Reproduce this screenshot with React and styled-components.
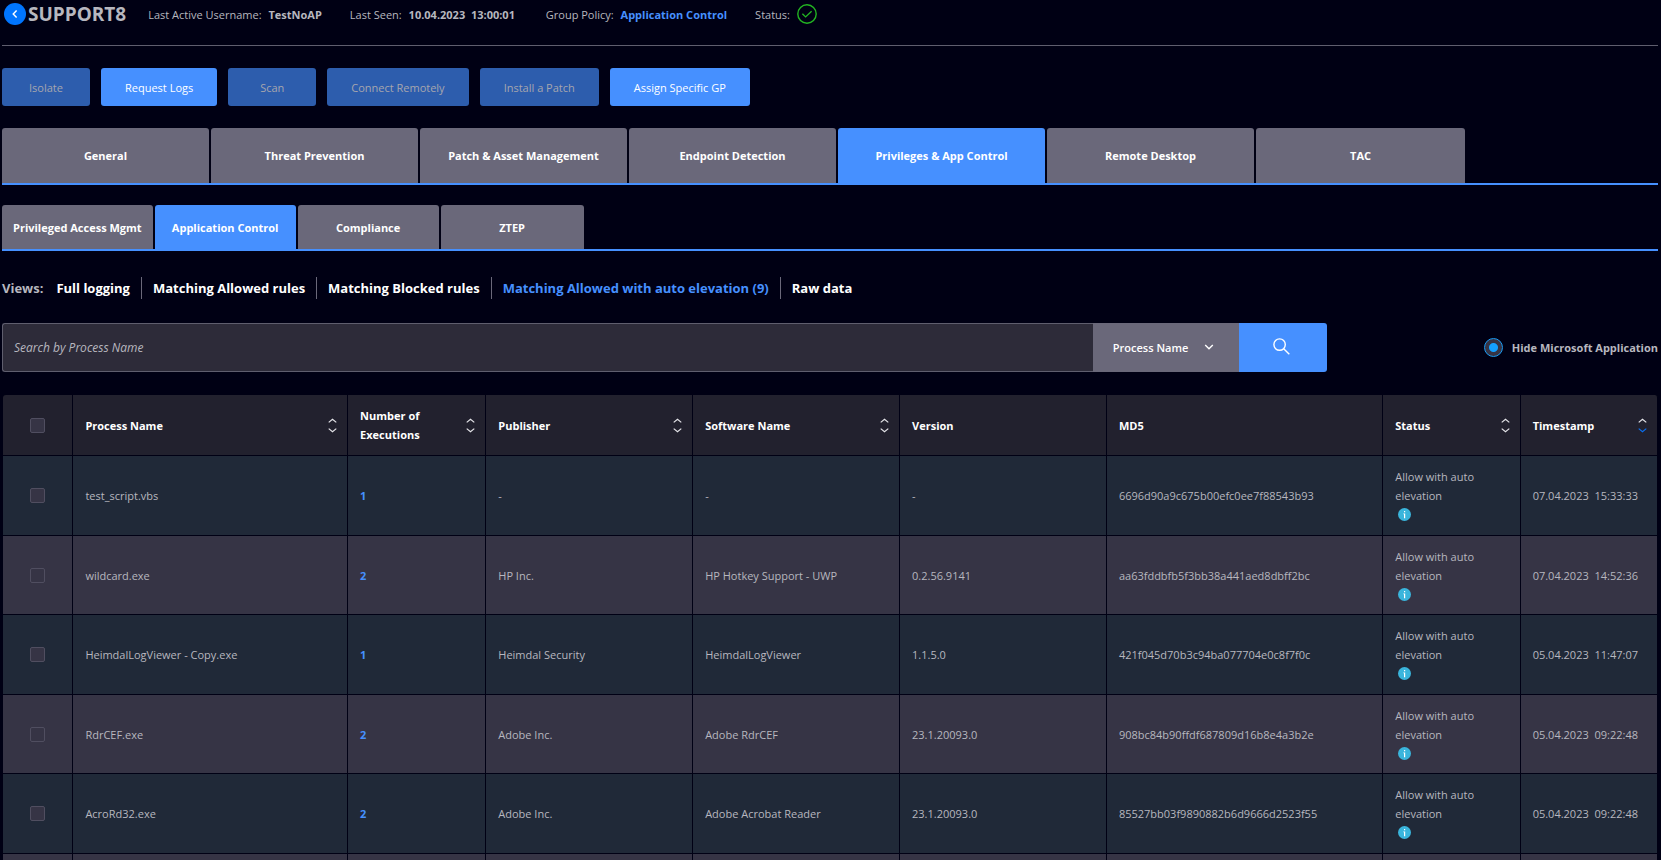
import React, { useState } from 'react';
import styled, { createGlobalStyle } from 'styled-components';

const GlobalStyle = createGlobalStyle`
  * {
    box-sizing: border-box;
  }

  body {
    margin: 0;
    background: #000014;
    color: #b7b7bf;
    font-family: 'Open Sans', 'Noto Sans', sans-serif;
    font-size: 11px;
    line-height: 19px;
  }

  button,
  input,
  select {
    font: inherit;
    margin: 0;
  }
`;

const Page = styled.main`
  height: 100vh;
  overflow: hidden;
  padding: 0 3px 0 2px;
`;

const Header = styled.header`
  display: flex;
  align-items: center;
  height: 46px;
  padding: 0 0 17px 2px;
  border-bottom: 1px solid #5f5e6e;
`;

const BackButton = styled.button`
  display: flex;
  align-items: center;
  justify-content: center;
  width: 22px;
  height: 22px;
  padding: 0;
  border: none;
  border-radius: 50%;
  background: #0075ff;
  cursor: pointer;
`;

const HostName = styled.h1`
  margin: 0 22px 0 2px;
  font-size: 19px;
  line-height: 28px;
  font-weight: 700;
`;

const HeaderInfo = styled.div`
  display: flex;
  align-items: center;
  gap: 4px;
  margin-right: 28px;
  white-space: pre;
`;

const Link = styled.a`
  color: #4690ff;
  font-weight: 700;
  text-decoration: none;
`;

const Actions = styled.div`
  display: flex;
  gap: 11px;
  margin-top: 22px;
`;

const ActionButton = styled.button`
  min-width: 88px;
  height: 38px;
  padding: 0 24px;
  border: none;
  border-radius: 3px;
  background: #4690ff;
  color: #fff;
  cursor: pointer;

  &:disabled {
    background: #2d5dad;
    color: #a6a6ae;
    cursor: default;
  }
`;

const Tabs = styled.nav`
  display: flex;
  gap: 2px;
  margin-top: ${(props) => (props.$small ? '20px' : '22px')};
  border-bottom: 2px solid #4690ff;
`;

const Tab = styled.button`
  width: 12.5%;
  height: 55px;
  padding: 0 11px;
  border: none;
  border-radius: 3px 3px 0 0;
  background: ${(props) => (props.$active ? '#4690ff' : '#6a687a')};
  color: #fff;
  font-weight: 700;
  cursor: pointer;

  &:last-child {
    width: calc(12.5% + 2px);
  }
`;

const SubTab = styled(Tab)`
  width: auto;
  min-width: 141px;
  height: 44px;

  &:last-child {
    width: 143px;
  }
`;

const Views = styled.div`
  display: flex;
  align-items: center;
  margin-top: 26px;
  font-size: 13px;
  line-height: 22px;
  font-weight: 700;
`;

const ViewsLabel = styled.span`
  margin-right: 2px;
`;

const View = styled.button`
  padding: 0 11px;
  border: none;
  background: none;
  color: ${(props) => (props.$active ? '#4690ff' : '#fff')};
  cursor: pointer;

  & + & {
    border-left: 1px solid #6a687a;
  }
`;

const SearchRow = styled.div`
  display: flex;
  align-items: center;
  justify-content: space-between;
  margin-top: 24px;
`;

const SearchForm = styled.form`
  display: flex;
  width: 80%;
  height: 49px;
`;

const SearchInput = styled.input`
  flex: 1;
  min-width: 0;
  padding: 0 11px;
  border: 1px solid #5f5e6e;
  border-right: none;
  border-radius: 3px 0 0 3px;
  background: #2d2b39;
  color: #fff;
  font-size: 12px;
  outline: none;

  &::placeholder {
    color: #b7b7bf;
    font-style: italic;
    opacity: 1;
  }
`;

const SelectBox = styled.div`
  position: relative;
  display: flex;
  width: 146px;
`;

const Select = styled.select`
  width: 100%;
  padding: 0 20px;
  border: none;
  border-radius: 0;
  appearance: none;
  background: #6a687a;
  color: #fff;
  font-weight: 600;
`;

const SelectArrow = styled.svg`
  position: absolute;
  top: 20px;
  right: 25px;
  pointer-events: none;
`;

const SearchButton = styled.button`
  width: 88px;
  padding: 0 2px 4px 0;
  border: none;
  border-radius: 0 3px 3px 0;
  background: #4690ff;
  cursor: pointer;

  svg {
    vertical-align: middle;
  }
`;

const HideOption = styled.label`
  display: flex;
  align-items: center;
  gap: 9px;
  font-weight: 700;
`;

const RoundCheck = styled.input.attrs({ type: 'checkbox' })`
  width: 19px;
  height: 19px;
  appearance: none;
  border: 1px solid #1c9cf5;
  border-radius: 50%;
  background: #363445;

  &:checked {
    background: radial-gradient(circle, #14a0ff 4px, #363445 5px);
  }
`;

const Table = styled.table`
  width: calc(100% - 1px);
  margin: 23px 0 0 1px;
  border-spacing: 0;
  table-layout: fixed;
`;

const Col = styled.col`
  width: ${(props) => props.$width};
`;

const HeadCell = styled.th`
  height: 61px;
  padding: 0 10px 0 12px;
  border: solid #000014;
  border-width: 0 1px 1px 0;
  background: #22212e;
  color: #fff;
  font-weight: 700;
  text-align: left;

  &:first-child {
    border-top-left-radius: 3px;
  }

  &:last-child {
    border-top-right-radius: 3px;
  }
`;

const HeadContent = styled.div`
  display: flex;
  align-items: center;
  justify-content: space-between;
  gap: 12px;
`;

const SortButton = styled.button`
  padding: 0;
  border: none;
  background: none;
  line-height: 0;
  cursor: pointer;
`;

const Row = styled.tr`
  height: 80px;
  background: #202938;

  &:nth-child(even) {
    height: 79px;
    background: #363445;
  }
`;

const Cell = styled.td`
  padding: 0 12px;
  border: solid #000014;
  border-width: 0 1px 1px 0;
  white-space: ${(props) => (props.$pre ? 'pre' : 'normal')};
`;

const Checkbox = styled.input.attrs({ type: 'checkbox' })`
  display: block;
  width: 15px;
  height: 15px;
  margin: 0 0 0 15px;
  appearance: none;
  border: 1px solid #504e60;
  border-radius: 2px;
  background: #363445;

  &:checked {
    background: #4690ff;
  }
`;

const InfoLine = styled.div`
  display: flex;
  align-items: center;
  height: 19px;
  padding-left: 3px;
`;

const actions = [
  { label: 'Isolate', disabled: true },
  { label: 'Request Logs' },
  { label: 'Scan', disabled: true },
  { label: 'Connect Remotely', disabled: true },
  { label: 'Install a Patch', disabled: true },
  { label: 'Assign Specific GP' },
];

const tabs = [
  'General',
  'Threat Prevention',
  'Patch & Asset Management',
  'Endpoint Detection',
  'Privileges & App Control',
  'Remote Desktop',
  'TAC',
];

const subTabs = ['Privileged Access Mgmt', 'Application Control', 'Compliance', 'ZTEP'];

const views = [
  'Full logging',
  'Matching Allowed rules',
  'Matching Blocked rules',
  'Matching Allowed with auto elevation (9)',
  'Raw data',
];

const columns = [
  { label: 'Process Name', width: '16.6%', sort: 'none' },
  { label: 'Number of Executions', width: '8.35%', sort: 'none' },
  { label: 'Publisher', width: '12.5%', sort: 'none' },
  { label: 'Software Name', width: '12.5%', sort: 'none' },
  { label: 'Version', width: '12.5%' },
  { label: 'MD5', width: '16.7%' },
  { label: 'Status', width: '8.3%', sort: 'none' },
  { label: 'Timestamp', width: '8.3%', sort: 'desc' },
];

const rows = [
  {
    process: 'test_script.vbs',
    executions: 1,
    publisher: '-',
    software: '-',
    version: '-',
    md5: '6696d90a9c675b00efc0ee7f88543b93',
    time: '07.04.2023  15:33:33',
  },
  {
    process: 'wildcard.exe',
    executions: 2,
    publisher: 'HP Inc.',
    software: 'HP Hotkey Support - UWP',
    version: '0.2.56.9141',
    md5: 'aa63fddbfb5f3bb38a441aed8dbff2bc',
    time: '07.04.2023  14:52:36',
  },
  {
    process: 'HeimdalLogViewer - Copy.exe',
    executions: 1,
    publisher: 'Heimdal Security',
    software: 'HeimdalLogViewer',
    version: '1.1.5.0',
    md5: '421f045d70b3c94ba077704e0c8f7f0c',
    time: '05.04.2023  11:47:07',
  },
  {
    process: 'RdrCEF.exe',
    executions: 2,
    publisher: 'Adobe Inc.',
    software: 'Adobe RdrCEF',
    version: '23.1.20093.0',
    md5: '908bc84b90ffdf687809d16b8e4a3b2e',
    time: '05.04.2023  09:22:48',
  },
  {
    process: 'AcroRd32.exe',
    executions: 2,
    publisher: 'Adobe Inc.',
    software: 'Adobe Acrobat Reader',
    version: '23.1.20093.0',
    md5: '85527bb03f9890882b6d9666d2523f55',
    time: '05.04.2023  09:22:48',
  },
];

function SortIcon({ sort }) {
  return (
    <svg width="9" height="15" viewBox="0 0 9 15" fill="none" strokeWidth="1.2">
      <path d="M.7 4.4 4.5 1.2l3.8 3.2" stroke="#e6e6ea" />
      <path d="m.7 10.6 3.8 3.2 3.8-3.2" stroke={sort === 'desc' ? '#0a6ff0' : '#e6e6ea'} />
    </svg>
  );
}

function InfoIcon() {
  return (
    <svg width="13" height="13" viewBox="0 0 13 13" role="img" aria-label="Details">
      <circle cx="6.5" cy="6.5" r="6.5" fill="#3ab5dc" />
      <path d="M6 3h1.2v1.3H6zM5.3 5.4h1.9v4.8H6V6.2h-.7z" fill="#fff" />
    </svg>
  );
}

function App() {
  const [tab, setTab] = useState('Privileges & App Control');
  const [subTab, setSubTab] = useState('Application Control');
  const [view, setView] = useState(views[3]);

  return (
    <Page>
      <GlobalStyle />

      <Header>
        <BackButton aria-label="Back">
          <svg width="6" height="10" viewBox="0 0 6 10" fill="none" stroke="#fff" strokeWidth="1.4">
            <path d="M4.6 1.4 1.2 5l3.4 3.6" />
          </svg>
        </BackButton>
        <HostName>SUPPORT8</HostName>
        <HeaderInfo>
          Last Active Username: <strong>TestNoAP</strong>
        </HeaderInfo>
        <HeaderInfo>
          Last Seen: <strong>{'10.04.2023  13:00:01 '}</strong>
        </HeaderInfo>
        <HeaderInfo>
          Group Policy: <Link href="#policy">Application Control</Link>
        </HeaderInfo>
        <HeaderInfo>
          Status:{' '}
          <svg width="20" height="20" viewBox="0 0 20 20" fill="none" stroke="#22b422" strokeWidth="1.4">
            <circle cx="10" cy="10" r="9.2" />
            <path d="m5.4 9.8 3.2 3.1 6-5.7" />
          </svg>
        </HeaderInfo>
      </Header>

      <Actions>
        {actions.map((action) => (
          <ActionButton key={action.label} disabled={action.disabled}>
            {action.label}
          </ActionButton>
        ))}
      </Actions>

      <Tabs>
        {tabs.map((name) => (
          <Tab key={name} $active={name === tab} onClick={() => setTab(name)}>
            {name}
          </Tab>
        ))}
      </Tabs>

      <Tabs $small>
        {subTabs.map((name) => (
          <SubTab key={name} $active={name === subTab} onClick={() => setSubTab(name)}>
            {name}
          </SubTab>
        ))}
      </Tabs>

      <Views>
        <ViewsLabel>Views:</ViewsLabel>
        {views.map((name) => (
          <View key={name} $active={name === view} onClick={() => setView(name)}>
            {name}
          </View>
        ))}
      </Views>

      <SearchRow>
        <SearchForm onSubmit={(e) => e.preventDefault()}>
          <SearchInput aria-label="Search" placeholder="Search by Process Name" />
          <SelectBox>
            <Select aria-label="Search field">
              <option>Process Name</option>
              <option>Publisher</option>
              <option>Software Name</option>
            </Select>
            <SelectArrow width="10" height="8" viewBox="0 0 10 8" fill="none" stroke="#fff" strokeWidth="1.4">
              <path d="M1.2 2 5 5.8 8.8 2" />
            </SelectArrow>
          </SelectBox>
          <SearchButton aria-label="Search">
            <svg width="17" height="17" viewBox="0 0 17 17" fill="none" stroke="#fff" strokeWidth="1.4">
              <circle cx="6.6" cy="6.6" r="5.7" />
              <path d="m10.7 10.7 5.6 5.6" />
            </svg>
          </SearchButton>
        </SearchForm>
        <HideOption>
          <RoundCheck defaultChecked />
          Hide Microsoft Application
        </HideOption>
      </SearchRow>

      <Table>
        <colgroup>
          <Col $width="70px" />
          {columns.map((column) => (
            <Col key={column.label} $width={column.width} />
          ))}
        </colgroup>
        <thead>
          <tr>
            <HeadCell>
              <Checkbox aria-label="Select all" />
            </HeadCell>
            {columns.map((column) => (
              <HeadCell key={column.label}>
                <HeadContent>
                  {column.label}
                  {column.sort && (
                    <SortButton aria-label={`Sort by ${column.label}`}>
                      <SortIcon sort={column.sort} />
                    </SortButton>
                  )}
                </HeadContent>
              </HeadCell>
            ))}
          </tr>
        </thead>
        <tbody>
          {rows.map((row) => (
            <Row key={row.md5}>
              <Cell>
                <Checkbox aria-label={`Select ${row.process}`} />
              </Cell>
              <Cell>{row.process}</Cell>
              <Cell>
                <Link href="#executions">{row.executions}</Link>
              </Cell>
              <Cell>{row.publisher}</Cell>
              <Cell>{row.software}</Cell>
              <Cell>{row.version}</Cell>
              <Cell>{row.md5}</Cell>
              <Cell>
                Allow with auto elevation
                <InfoLine>
                  <InfoIcon />
                </InfoLine>
              </Cell>
              <Cell $pre>{row.time}</Cell>
            </Row>
          ))}
          <Row>
            <Cell />
            {columns.map((column) => (
              <Cell key={column.label} />
            ))}
          </Row>
        </tbody>
      </Table>
    </Page>
  );
}

export default App;
